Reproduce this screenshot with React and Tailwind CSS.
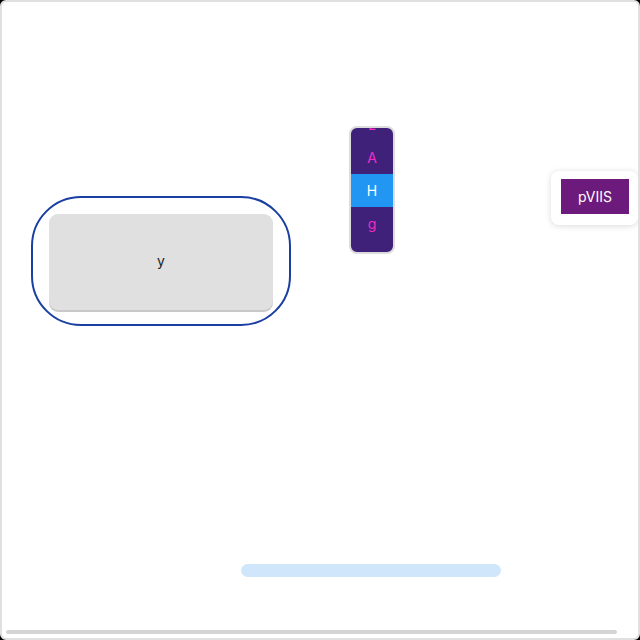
export default function App() {
  const items = [
    { t: "z", sel: false },
    { t: "A", sel: false },
    { t: "H", sel: true },
    { t: "g", sel: false },
    { t: "y", sel: false },
  ];
  return (
    <div className="w-[640px] h-[640px] bg-black">
      <div
        className="relative w-[640px] h-[640px] bg-white border-2 border-[#e0e0e0] rounded-[6px] overflow-hidden"
        style={{ fontFamily: 'Inter, "Noto Sans", sans-serif' }}
      >
        <div className="flex items-start">
          <div className="ml-[29px] mt-[194px] w-[260px] h-[130px] border-2 border-[#1a3fa3] rounded-[50px] p-[16px]">
            <div className="w-[224px] h-[96px] bg-[#e0e0e0] rounded-[9px] shadow-[0_2px_0_#c9c9c9] flex items-center justify-center pb-[3px] text-[14px] text-[#222]">
              y
            </div>
          </div>
          <div className="ml-[58px] mt-[124px] w-[46px] h-[128px] border-2 border-[#dcdcdc] rounded-[8px] bg-[#40217a] overflow-hidden">
            <div className="-mt-[20px] flex flex-col">
              {items.map((it, i) => (
                <div
                  key={i}
                  className={
                    it.sel
                      ? "h-[33px] shrink-0 flex items-center justify-center bg-[#2196f3] text-white text-[14px]"
                      : "h-[33px] shrink-0 flex items-center justify-center text-[#f02cc4] text-[14px]"
                  }
                >
                  {it.t}
                </div>
              ))}
            </div>
          </div>
          <div className="ml-[156px] mt-[169px] w-[87px] h-[54px] bg-white rounded-[8px] shadow-[0_1px_6px_rgba(0,0,0,0.15)] pl-[10px] pt-[8px] shrink-0">
            <div className="w-[68px] h-[35px] bg-[#6c1a7c] text-white text-[14px] flex items-center justify-center">
              pVIIS
            </div>
          </div>
        </div>
        <div className="ml-[239px] mt-[238px] w-[260px] h-[13px] rounded-full bg-[#d0e7fb]" />
        <div className="absolute left-[4px] top-[628px] w-[611px] h-[4px] rounded-full bg-[#d4d4d4]" />
      </div>
    </div>
  );
}
